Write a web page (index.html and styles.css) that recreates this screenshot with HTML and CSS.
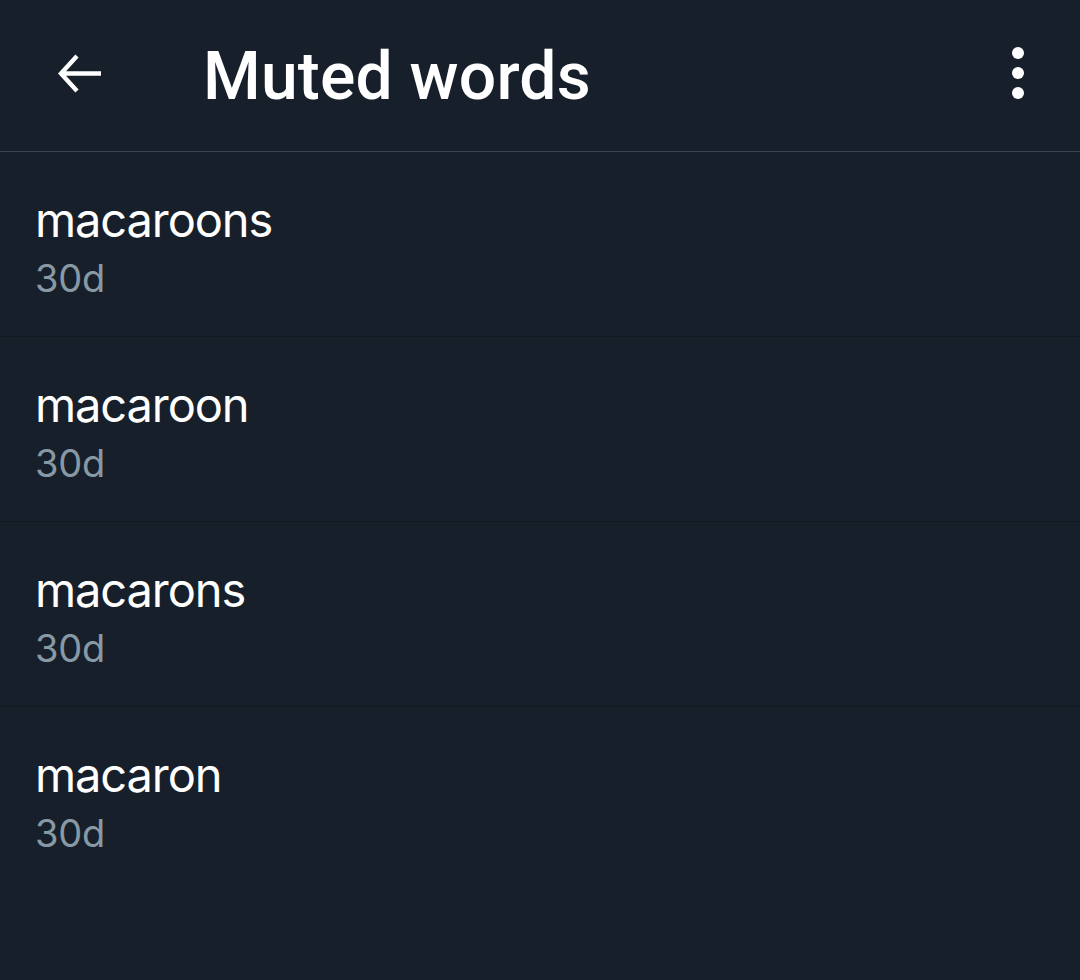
FILE: index.html
```html
<!DOCTYPE html>
<html>
<head>
<meta charset="utf-8">
<link rel="stylesheet" href="styles.css">
</head>
<body>
<div class="app">
  <header class="bar">
    <div class="back">
      <svg width="50" height="46" viewBox="0 0 50 46"><path d="M46 21.5H7M22 4 6 21.5 22 39" fill="none" stroke="#fff" stroke-width="4.4"/></svg>
    </div>
    <h1 class="title">Muted words</h1>
    <div class="more">
      <span class="dot"></span><span class="dot"></span><span class="dot"></span>
    </div>
  </header>
  <ul class="list">
    <li class="row"><div class="word">macaroons</div><div class="dur">30d</div></li>
    <li class="row"><div class="word">macaroon</div><div class="dur">30d</div></li>
    <li class="row"><div class="word">macarons</div><div class="dur">30d</div></li>
    <li class="row"><div class="word">macaron</div><div class="dur">30d</div></li>
  </ul>
</div>
</body>
</html>
```
FILE: styles.css
```css
html, body { margin: 0; padding: 0; }
body { background: #17202a; width: 1080px; height: 980px; overflow: hidden; }
.app { display: flex; flex-direction: column; }
.bar {
  height: 151px;
  border-bottom: 1px solid #38434d;
  display: flex;
  align-items: center;
  box-sizing: content-box;
}
.back { width: 50px; height: 46px; margin-left: 55px; margin-top: -2px; display: flex; }
.title {
  margin: 0 0 0 98px;
  font-family: Roboto, sans-serif;
  font-weight: 500;
  font-size: 66px;
  color: #fff;
  flex: 1;
  line-height: 1;
  margin-top: 2px;
  letter-spacing: 0.2px;
}
.more { display: flex; flex-direction: column; gap: 8px; margin-right: 56px; margin-top: -6px; }
.dot { width: 12px; height: 12px; border-radius: 50%; background: #fff; display: block; }
.list { list-style: none; margin: 0; padding: 0; }
.row {
  height: 184px;
  border-bottom: 1px solid #111921;
  padding-left: 35px;
  box-sizing: content-box;
  font-family: Inter, "Liberation Sans", sans-serif;
}
.row:last-child { border-bottom: none; }
.word { color: #fff; font-size: 47px; line-height: 1; padding-top: 44px; letter-spacing: -1.1px; }
.dur { color: #8899a6; font-size: 38px; line-height: 1; margin-top: 16px; letter-spacing: -0.2px; }
```
